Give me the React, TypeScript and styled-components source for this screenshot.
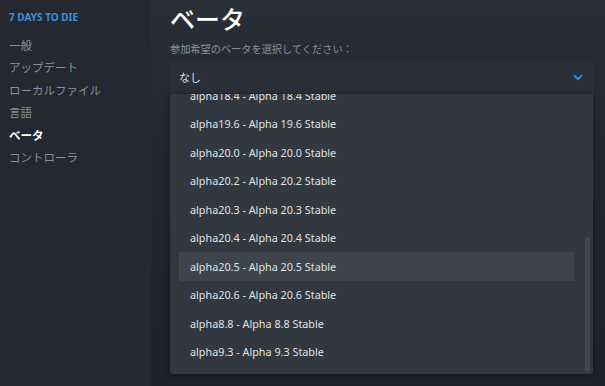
import styled, { createGlobalStyle } from "styled-components";

const GlobalStyle = createGlobalStyle`
  html, body {
    margin: 0;
    padding: 0;
    background: #1f2228;
  }
  body {
    font-family: "Noto Sans", "Noto Sans CJK JP", sans-serif;
  }
`;

const Page = styled.div`
  display: flex;
  width: 605px;
  height: 386px;
  overflow: hidden;
`;

const Sidebar = styled.nav`
  width: 151px;
  flex-shrink: 0;
  background: #252830;
  padding: 10px 0 0 9px;
  box-sizing: border-box;
`;

const GameTitle = styled.div`
  color: #3d8fd9;
  font-family: "Noto Sans", sans-serif;
  font-weight: 700;
  font-size: 10px;
  line-height: 14px;
  margin-bottom: 10px;
`;

const NavItem = styled.div<{ $active?: boolean }>`
  color: ${(p) => (p.$active ? "#ffffff" : "#8a9099")};
  font-weight: ${(p) => (p.$active ? 700 : 400)};
  font-family: "Noto Sans CJK JP", sans-serif;
  font-size: 11.5px;
  height: 22.4px;
  line-height: 22.4px;
`;

const Main = styled.main`
  flex: 1;
  background: linear-gradient(180deg, #2a2e36 0%, #23262d 40%, #1f2228 100%);
  padding: 0 12px 0 19px;
  display: flex;
  flex-direction: column;
`;

const Heading = styled.h1`
  margin: 0;
  color: #ffffff;
  font-family: "Noto Sans CJK JP", sans-serif;
  font-weight: 500;
  font-size: 25px;
  line-height: 36px;
`;

const Label = styled.div`
  color: #8a9099;
  font-family: "Noto Sans CJK JP", sans-serif;
  font-size: 10.2px;
  line-height: 14px;
  margin-top: 6px;
`;

const Select = styled.div`
  margin-top: 5px;
  height: 32px;
  background: #2b2f37;
  border-radius: 3px 3px 0 0;
  display: flex;
  align-items: center;
  justify-content: space-between;
  padding: 0 10px 0 9px;
  color: #dcdedf;
  font-family: "Noto Sans CJK JP", sans-serif;
  font-size: 11px;
`;

const Dropdown = styled.div`
  position: relative;
  margin-top: 1px;
  height: 280px;
  background: #33373f;
  border-radius: 0 0 3px 3px;
  box-shadow: 0 2px 6px rgba(0, 0, 0, 0.35);
  overflow: hidden;
  padding: 0 19px 0 9px;
`;

const OptionList = styled.div`
  margin-top: -13px;
`;

const Option = styled.div<{ $hover?: boolean }>`
  height: 28.5px;
  display: flex;
  align-items: center;
  padding-left: 11px;
  background: ${(p) => (p.$hover ? "#3e434c" : "transparent")};
  color: #dfe3e6;
  font-family: "Noto Sans", sans-serif;
  font-size: 10.8px;
`;

const ScrollThumb = styled.div`
  position: absolute;
  right: 3px;
  top: 143px;
  bottom: 2px;
  width: 5px;
  border-radius: 3px;
  background: #41464f;
`;

const navItems = ["一般", "アップデート", "ローカルファイル", "言語", "ベータ", "コントローラ"];

const betas = [
  "alpha18.4 - Alpha 18.4 Stable",
  "alpha19.6 - Alpha 19.6 Stable",
  "alpha20.0 - Alpha 20.0 Stable",
  "alpha20.2 - Alpha 20.2 Stable",
  "alpha20.3 - Alpha 20.3 Stable",
  "alpha20.4 - Alpha 20.4 Stable",
  "alpha20.5 - Alpha 20.5 Stable",
  "alpha20.6 - Alpha 20.6 Stable",
  "alpha8.8 - Alpha 8.8 Stable",
  "alpha9.3 - Alpha 9.3 Stable",
];

function Chevron() {
  return (
    <svg width="10" height="7" viewBox="0 0 10 7">
      <path d="M1 1.2 L5 5.2 L9 1.2" fill="none" stroke="#1a9fff" strokeWidth="1.8" />
    </svg>
  );
}

export default function App() {
  return (
    <>
      <GlobalStyle />
      <Page>
        <Sidebar>
          <GameTitle>7 DAYS TO DIE</GameTitle>
          {navItems.map((item) => (
            <NavItem key={item} $active={item === "ベータ"}>
              {item}
            </NavItem>
          ))}
        </Sidebar>
        <Main>
          <Heading>ベータ</Heading>
          <Label>参加希望のベータを選択してください：</Label>
          <Select>
            なし
            <Chevron />
          </Select>
          <Dropdown>
            <OptionList>
              {betas.map((b) => (
                <Option key={b} $hover={b.startsWith("alpha20.5")}>
                  {b}
                </Option>
              ))}
            </OptionList>
            <ScrollThumb />
          </Dropdown>
        </Main>
      </Page>
    </>
  );
}
